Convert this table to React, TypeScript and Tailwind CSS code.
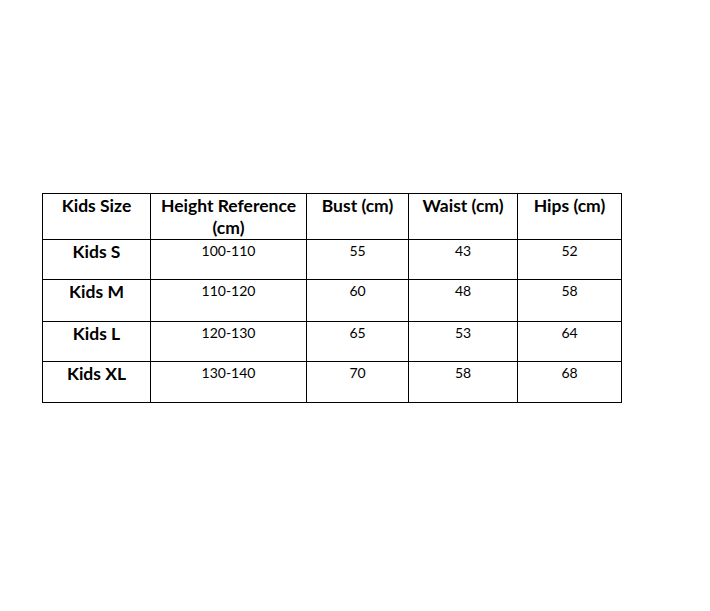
import React from "react";

const rows = [
  ["Kids S", "100-110", "55", "43", "52"],
  ["Kids M", "110-120", "60", "48", "58"],
  ["Kids L", "120-130", "65", "53", "64"],
  ["Kids XL", "130-140", "70", "58", "68"],
];
const heights = ["h-[40px]", "h-[42px]", "h-[40px]", "h-[41px]"];

export default function App() {
  return (
    <div className="w-[710px] h-[611px] bg-white pt-[193px] pl-[42px] text-black" style={{ fontFamily: "Lato, 'Open Sans', sans-serif" }}>
      <table className="border-collapse table-fixed w-[579px]">
        <colgroup>
          <col className="w-[108px]" />
          <col className="w-[156px]" />
          <col className="w-[102px]" />
          <col className="w-[109px]" />
          <col className="w-[104px]" />
        </colgroup>
        <thead>
          <tr className="h-[46px]">
            {["Kids Size", "Height Reference (cm)", "Bust (cm)", "Waist (cm)", "Hips (cm)"].map((h) => (
              <th key={h} className="border border-black align-top text-center font-bold text-[17.5px] leading-[22px] pt-[1px] px-0">
                {h}
              </th>
            ))}
          </tr>
        </thead>
        <tbody>
          {rows.map((r, i) => (
            <tr key={r[0]} className={heights[i]}>
              {r.map((c, j) => (
                <td
                  key={j}
                  className={
                    "border border-black align-top text-center px-0 pb-0 pt-[1px] " +
                    (j === 0 ? "font-bold text-[17.5px] leading-[22px]" : "text-[14px] leading-[20px]")
                  }
                >
                  {c}
                </td>
              ))}
            </tr>
          ))}
        </tbody>
      </table>
    </div>
  );
}
